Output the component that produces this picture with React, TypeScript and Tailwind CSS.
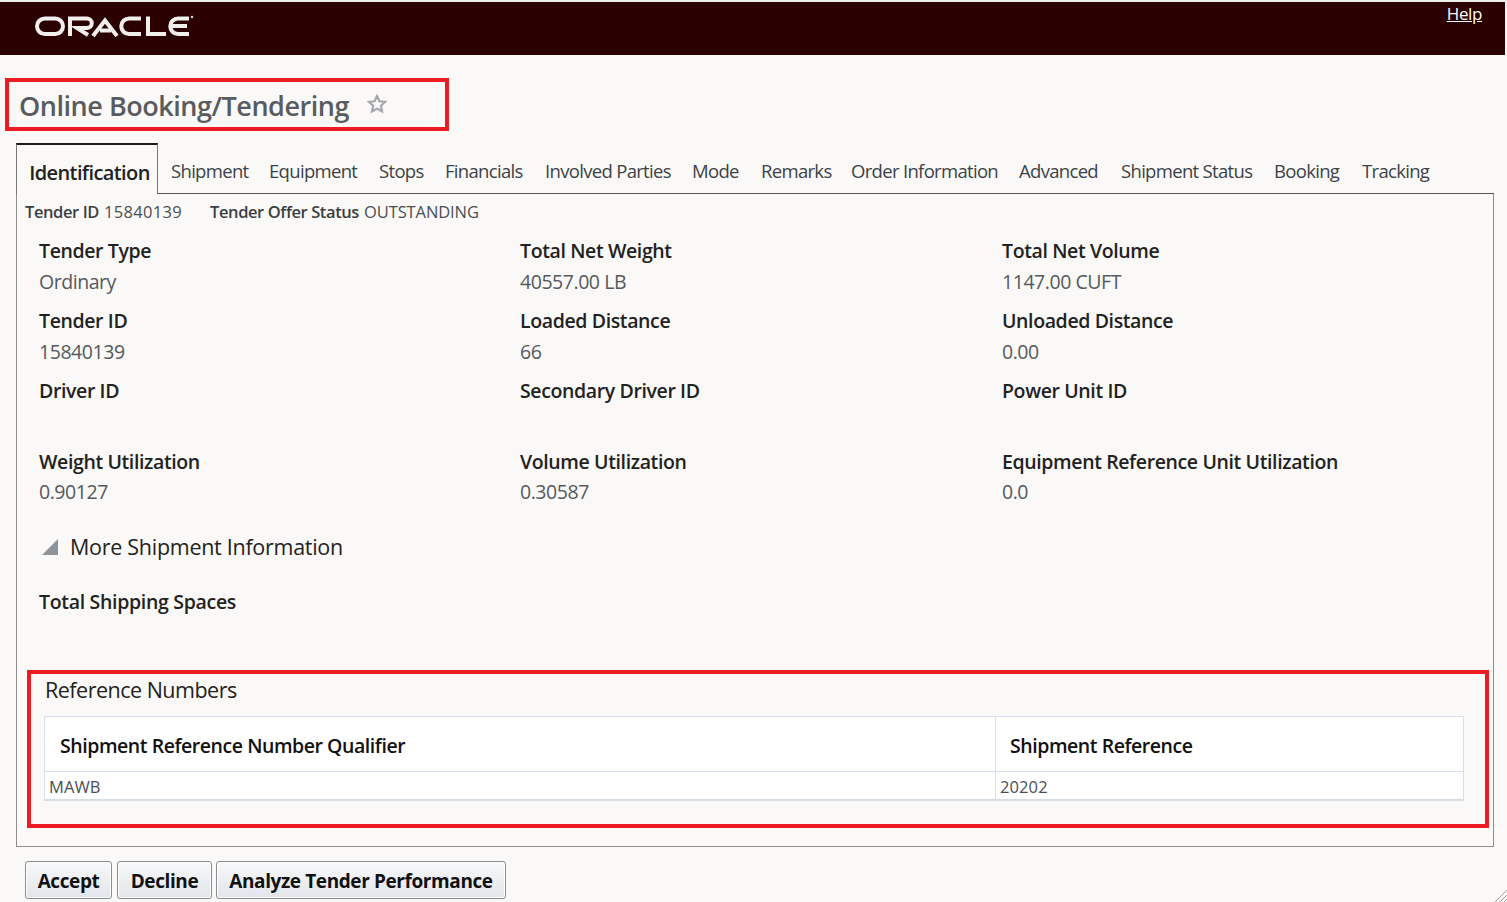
const font = "font-['Open_Sans','Noto_Sans',sans-serif]";

const tabs: [string, string][] = [
  ["Shipment", "w-[98px]"],
  ["Equipment", "w-[110px]"],
  ["Stops", "w-[66px]"],
  ["Financials", "w-[100px]"],
  ["Involved Parties", "w-[147px]"],
  ["Mode", "w-[69px]"],
  ["Remarks", "w-[90px]"],
  ["Order Information", "w-[168px]"],
  ["Advanced", "w-[102px]"],
  ["Shipment Status", "w-[153px]"],
  ["Booking", "w-[88px]"],
  ["Tracking", "w-[80px]"],
];

const rows: { h: string; v: string; cells: [string, string][] }[] = [
  { h: "h-[70px]", v: "h-[30px]", cells: [["Tender Type", "Ordinary"], ["Total Net Weight", "40557.00 LB"], ["Total Net Volume", "1147.00 CUFT"]] },
  { h: "h-[70px]", v: "h-[30px]", cells: [["Tender ID", "15840139"], ["Loaded Distance", "66"], ["Unloaded Distance", "0.00"]] },
  { h: "h-[71px]", v: "h-[30px]", cells: [["Driver ID", ""], ["Secondary Driver ID", ""], ["Power Unit ID", ""]] },
  { h: "h-[70px]", v: "h-[30px] -mt-[1px]", cells: [["Weight Utilization", "0.90127"], ["Volume Utilization", "0.30587"], ["Equipment Reference Unit Utilization", "0.0"]] },
];

function Logo() {
  return (
    <svg width="160" height="26" viewBox="0 0 160 26" fill="none" stroke="#f2eeee" strokeWidth="4" className="block">
      <rect x="2" y="4.500" width="26" height="15.500" rx="7.750" />
      <path d="M35 22V4.500h17a4.700 4.700 0 0 1 0 9.500H42l11 7" />
      <path d="M58 22 70 6.500 82 22M65 16.500h11" />
      <path d="M106 4.500H94a7.750 7.750 0 0 0 0 15.500h12" />
      <path d="M113 2.500V20h18" />
      <path d="M154 4.500h-11a7.750 7.750 0 0 0 0 15.500h11M136 12h16" />
      <circle cx="157" cy="3" r="1" fill="#fff" strokeWidth="0.5" />
    </svg>
  );
}

function Button({ label, w }: { label: string; w: string }) {
  return (
    <button className={`${w} h-[38px] rounded-[3px] border border-[#8a8d90] bg-gradient-to-b from-[#f7f8f9] to-[#e2e6ea] pt-[2px] text-[19px] font-bold tracking-[-0.4px] text-[#111] shadow-[inset_0_0_0_1px_#fff]`}>
      {label}
    </button>
  );
}

export default function App() {
  return (
    <div className={`${font} h-[902px] w-[1507px] overflow-hidden bg-[#faf9f7] text-[#333] relative`}>
      <div className="h-[2px] bg-[#eeeeee]" />
      <header className="mr-[2px] flex h-[53px] justify-between bg-[#2a0000] pl-[35px] pr-[23px]">
        <div className="pt-[12px]"><Logo /></div>
        <a className="text-[17px] tracking-[-0.4px] text-white underline leading-[24px]">Help</a>
      </header>

      <div className="ml-[5px] mt-[23px] flex h-[53px] w-[444px] items-center border-[4px] border-[#ed1c24] pl-[10px]">
        <h1 className="mt-[1px] text-[27px] font-semibold tracking-[-0.47px] text-[#585c60] leading-none">Online Booking/Tendering</h1>
        <svg width="20" height="20" viewBox="0 0 24 24" fill="#f8f8f8" stroke="#a3a7ab" strokeWidth="2.600" className="ml-[18px] -mt-[1px]">
          <path d="m12 2.500 2.900 6.200 6.800.8-5 4.700 1.300 6.800-6-3.400-6 3.400 1.300-6.800-5-4.700 6.800-.8z" />
        </svg>
      </div>

      <nav className="ml-[16px] mt-[12px] flex h-[51px] w-[1478px] items-stretch">
        <div className="flex w-[142px] items-center justify-center border-x border-t-2 border-x-[#777] border-t-[#1a1a1a] pl-[5px] pt-[7px] text-[20px] font-semibold tracking-[-0.6px] text-[#222]">
          Identification
        </div>
        <div className="flex flex-1 border-b border-[#555]">
          {tabs.map(([t, w]) => (
            <div key={t} className={`${w} pl-[13px] pt-[15px] text-[18.500px] leading-[25px] tracking-[-0.68px] text-[#3c4248] whitespace-nowrap shrink-0`}>{t}</div>
          ))}
        </div>
      </nav>

      <main className="ml-[16px] h-[653px] w-[1478px] border-x border-b border-[#8c8c8c] pl-[8px] pr-[9px]">
        <div className="flex h-[37px] items-center text-[16.500px] tracking-[-0.1px] text-[#4a4f54]">
          <b className="font-semibold tracking-[-0.4px] text-[#3a3f44]">Tender ID</b>
          <span className="ml-[5px] w-[106px] tracking-[0.3px]">15840139</span>
          <b className="font-semibold tracking-[-0.4px] text-[#3a3f44]">Tender Offer Status</b>
          <span className="ml-[5px]">OUTSTANDING</span>
        </div>

        <div className="pl-[14px] pt-[5px] text-[19.500px]">
          {rows.map((r, i) => (
            <div key={i} className={`grid grid-cols-[481px_482px_1fr] ${r.h}`}>
              {r.cells.map(([l, v]) => (
                <div key={l} className="flex flex-col">
                  <span className="h-[31px] pt-[1px] font-semibold tracking-[-0.38px] text-[#222] leading-[27px]">{l}</span>
                  <span className={`${r.v} tracking-[-0.45px] text-[#555a5e] leading-[29px]`}>{v}</span>
                </div>
              ))}
            </div>
          ))}
        </div>

        <div className="mt-[12px] flex h-[36px] items-center pl-[16px]">
          <svg width="18" height="18" viewBox="0 0 18 18"><path d="M17 1v16H1z" fill="#8f9499" /></svg>
          <span className="ml-[11px] text-[21.500px] tracking-[-0.28px] text-[#222] font-medium">More Shipment Information</span>
        </div>

        <div className="mt-[18px] h-[87px] pl-[14px] text-[19.500px] font-semibold tracking-[-0.31px] text-[#222] leading-[38px]">Total Shipping Spaces</div>

        <section className="ml-[2px] h-[158px] w-[1462px] border-[4px] border-[#ed1c24] pl-[13px]">
          <h2 className="ml-[1px] h-[42px] pt-[2px] text-[21.500px] tracking-[-0.5px] text-[#222] font-medium leading-[28px]">Reference Numbers</h2>
          <table className="w-[1420px] table-fixed border-collapse bg-white border-b-2 border-b-[#d5dde5]">
            <thead>
              <tr className="h-[55px] text-left text-[19.500px] tracking-[-0.45px] text-[#111]">
                <th className="w-[951px] border border-[#d5e0ea] pl-[15px] pt-[3px] font-semibold">Shipment Reference Number Qualifier</th>
                <th className="border border-[#d5e0ea] pl-[14px] pt-[3px] font-semibold">Shipment Reference</th>
              </tr>
            </thead>
            <tbody>
              <tr className="h-[28px] text-[16.500px] leading-[22px] tracking-[0.1px] text-[#4a4f54]">
                <td className="border border-[#d5e0ea] pl-[4px] pt-[4px]">MAWB</td>
                <td className="border border-[#d5e0ea] pl-[4px] pt-[4px]">20202</td>
              </tr>
            </tbody>
          </table>
        </section>
      </main>

      <div className="ml-[25px] mt-[14px] flex gap-[5px]">
        <Button label="Accept" w="w-[87px]" />
        <Button label="Decline" w="w-[95px] -mr-[1px]" />
        <Button label="Analyze Tender Performance" w="w-[290px]" />
      </div>

      <svg width="14" height="14" viewBox="0 0 14 14" stroke="#a0a0a0" className="absolute bottom-0 right-0">
        <path d="M2 14 14 2M7 14l7-7M11 14l3-3" />
      </svg>
    </div>
  );
}
